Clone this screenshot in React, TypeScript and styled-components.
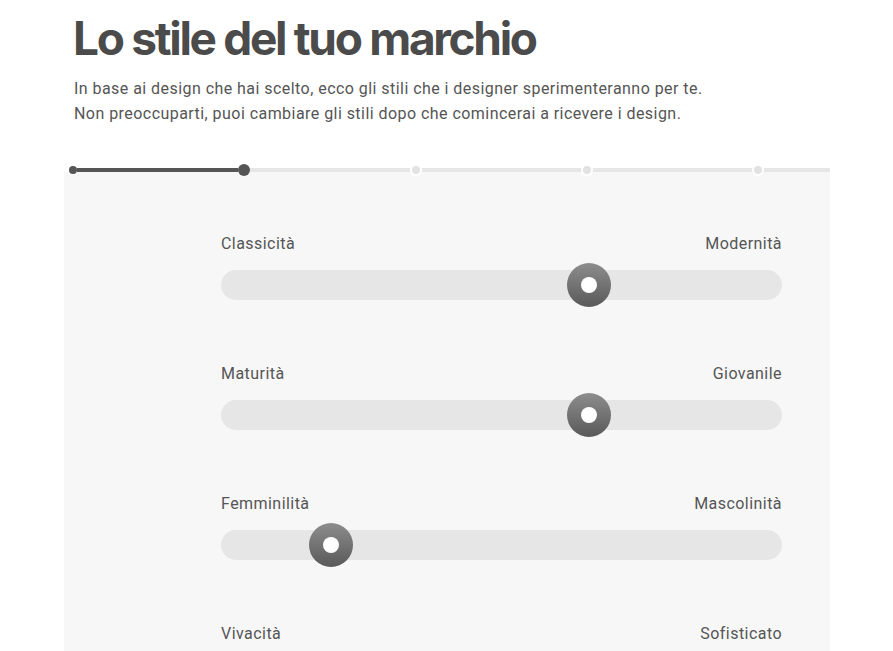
import React from "react";
import styled, { createGlobalStyle } from "styled-components";

const sliders = [
  { left: "Classicità", right: "Modernità", value: 0.67 },
  { left: "Maturità", right: "Giovanile", value: 0.67 },
  { left: "Femminilità", right: "Mascolinità", value: 0.17 },
  { left: "Vivacità", right: "Sofisticato", value: 0.5 },
];

const steps = [
  { dot: "start", line: 161, done: true },
  { dot: "current", line: 162, done: false },
  { dot: "todo", line: 163, done: false },
  { dot: "todo", line: 163, done: false },
  { dot: "todo", line: 68, done: false },
];

const App = () => {
  return (
    <Page>
      <GlobalStyle />
      <Title>Lo stile del tuo marchio</Title>
      <Intro>
        In base ai design che hai scelto, ecco gli stili che i designer sperimenteranno per te.
        <br />
        Non preoccuparti, puoi cambiare gli stili dopo che comincerai a ricevere i design.
      </Intro>
      <Progress>
        {steps.map((s, i) => (
          <React.Fragment key={i}>
            <Dot kind={s.dot} />
            <Line done={s.done} style={{ width: s.line }} />
          </React.Fragment>
        ))}
      </Progress>
      <Panel>
        {sliders.map((s) => (
          <SliderRow key={s.left}>
            <Labels>
              <span>{s.left}</span>
              <span>{s.right}</span>
            </Labels>
            <Track>
              <Thumb style={{ left: `calc(${s.value * 100}% - ${s.value * 44}px)` }} />
            </Track>
          </SliderRow>
        ))}
      </Panel>
    </Page>
  );
};

export default App;

const GlobalStyle = createGlobalStyle`
  body {
    margin: 0;
    background: #fff;
    font-family: Roboto, "Liberation Sans", sans-serif;
    color: #555;
  }
`;

const Page = styled.div`
  width: 766px;
  margin-left: 64px;
  overflow: hidden;
  height: 651px;
`;

const Title = styled.h1`
  margin: 9px 0 0 9px;
  font-family: Inter, "Liberation Sans", sans-serif;
  font-weight: 700;
  font-size: 46px;
  letter-spacing: -2.3px;
  line-height: 58px;
  color: #4b4b4b;
`;

const Intro = styled.p`
  margin: 9px 0 0 10px;
  font-size: 16px;
  line-height: 25px;
  color: #555;
  letter-spacing: 0.45px;
`;

const Progress = styled.div`
  display: flex;
  align-items: center;
  height: 4px;
  margin-top: 42px;
  padding-left: 5px;
`;

const Dot = styled.div<{ kind: string }>`
  flex: none;
  position: relative;
  box-sizing: border-box;
  border-radius: 50%;
  width: ${(p) => (p.kind === "current" ? "12px" : "8px")};
  height: ${(p) => (p.kind === "current" ? "12px" : "8px")};
  background: ${(p) => (p.kind === "todo" ? "#e2e2e2" : "#555")};
  box-shadow: ${(p) => (p.kind === "todo" ? "0 0 0 2px #fff" : "none")};
  z-index: 1;
`;

const Line = styled.div<{ done: boolean }>`
  flex: none;
  height: 4px;
  background: ${(p) => (p.done ? "#555" : "#e6e6e6")};
`;

const Panel = styled.div`
  background: #f7f7f7;
  padding: 62px 48px 0 157px;
  min-height: 480px;
`;

const SliderRow = styled.div`
  margin-bottom: 64px;
`;

const Labels = styled.div`
  display: flex;
  justify-content: space-between;
  font-size: 16px;
  line-height: 20px;
  letter-spacing: 0.45px;
  color: #555;
  margin-bottom: 16px;
`;

const Track = styled.div`
  position: relative;
  height: 30px;
  border-radius: 15px;
  background: #e6e6e6;
`;

const Thumb = styled.div`
  position: absolute;
  top: -7px;
  width: 44px;
  height: 44px;
  border-radius: 50%;
  background: linear-gradient(#8d8d8d, #595959);
  display: flex;
  align-items: center;
  justify-content: center;

  &::after {
    content: "";
    width: 16px;
    height: 16px;
    border-radius: 50%;
    background: #fff;
  }
`;
